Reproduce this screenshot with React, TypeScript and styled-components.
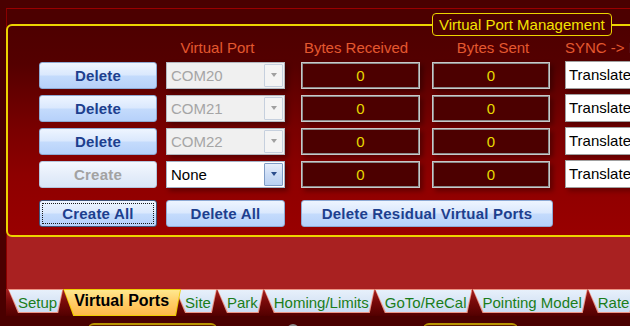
import styled, { createGlobalStyle } from "styled-components";

const GlobalStyle = createGlobalStyle`
  html, body {
    margin: 0;
    padding: 0;
    background: #4a0000;
    overflow: hidden;
  }
  body {
    font-family: "Liberation Sans", Arial, sans-serif;
  }
`;

const Page = styled.div`
  width: 630px;
  height: 326px;
  box-sizing: border-box;
  overflow: hidden;
  padding: 8px 0 0 6px;
  background: #4a0000;
`;

const TabControl = styled.div`
  width: 740px;
`;

const TabPage = styled.div`
  height: 281px;
  box-sizing: border-box;
  padding-top: 4px;
  border-top: 1px solid #9a0000;
  border-left: 1px solid #8a0000;
  background: linear-gradient(to bottom, #4c0000 0, #4c0000 30px, #a92121 30px);
`;

const GroupBox = styled.fieldset`
  margin: 0 0 0 -1px;
  padding: 4px 0 9px 0;
  min-width: 0;
  border: 2px solid #ecd400;
  border-radius: 6px;
  background: linear-gradient(
    to bottom,
    #4e0000 0%,
    #540000 18%,
    #7a0000 50%,
    #8e0000 72%,
    #990000 100%
  );
`;

const Legend = styled.legend`
  margin-left: 424px;
  padding: 0 6px;
  height: 23px;
  box-sizing: border-box;
  line-height: 21px;
  border: 1px solid #ecd400;
  border-radius: 4px;
  background: #4c0000;
  color: #f4e300;
  font-size: 15px;
`;

const Rows = styled.div`
  display: flex;
  flex-direction: column;
  gap: 6px;
  padding-left: 31px;
`;

const Row = styled.div<{ $h: number; $top?: number }>`
  display: grid;
  grid-template-columns: 127px 135px 131px 133px 1fr;
  align-items: center;
  height: ${(p) => p.$h}px;
  margin-top: ${(p) => p.$top ?? 0}px;
`;

const HeaderCell = styled.div<{ $w: number; $left?: number; $right?: number; $align?: string }>`
  width: ${(p) => p.$w}px;
  box-sizing: border-box;
  padding-left: ${(p) => p.$left ?? 0}px;
  padding-right: ${(p) => p.$right ?? 0}px;
  text-align: ${(p) => p.$align ?? "center"};
  white-space: nowrap;
  color: #e4582f;
  font-size: 15px;
  line-height: 15px;
`;

const Button = styled.button<{ $w: number; $focused?: boolean; $span?: number }>`
  width: ${(p) => p.$w}px;
  height: 27px;
  box-sizing: border-box;
  margin: 1px 0 0 0;
  padding: 0;
  grid-column: span ${(p) => p.$span ?? 1};
  font-family: "Liberation Sans", Arial, sans-serif;
  font-weight: bold;
  font-size: 15px;
  letter-spacing: 0.2px;
  color: #1d3f8e;
  border: 1px solid ${(p) => (p.$focused ? "#42557a" : "#8eaad4")};
  border-radius: 3px;
  background: linear-gradient(
    to bottom,
    #eef5ff 0%,
    #dae8fd 48%,
    #c4dbfc 52%,
    #b6d1fa 100%
  );
  outline: ${(p) => (p.$focused ? "1px dotted #1a1a1a" : "none")};
  outline-offset: -4px;

  &:disabled {
    color: #a2a2a2;
    border-color: #b4c6de;
    background: linear-gradient(to bottom, #f4f8fe 0%, #e6eefa 50%, #d9e6f7 100%);
  }
`;

const Combo = styled.div<{ $disabled?: boolean }>`
  width: 119px;
  height: 27px;
  box-sizing: border-box;
  display: flex;
  align-items: center;
  padding: 0 1px 0 4px;
  border: 1px solid ${(p) => (p.$disabled ? "#b2b8c0" : "#a3b3c8")};
  background: ${(p) => (p.$disabled ? "#f0f0f0" : "#ffffff")};
  color: ${(p) => (p.$disabled ? "#a5a5a5" : "#000000")};
  font-size: 15px;
  box-shadow: 3px 3px 5px rgba(0, 0, 0, 0.35);
`;

const ComboValue = styled.span`
  flex: 1;
`;

const ComboArrow = styled.span<{ $disabled?: boolean }>`
  width: 19px;
  height: 23px;
  box-sizing: border-box;
  display: flex;
  align-items: center;
  justify-content: center;
  border: 1px solid ${(p) => (p.$disabled ? "#c6d0de" : "#7f9cc6")};
  border-radius: 1px;
  background: ${(p) =>
    p.$disabled
      ? "#f4f4f4"
      : "linear-gradient(to bottom, #e6eefb 0%, #cbdcf5 50%, #b9d0f2 100%)"};

  &::after {
    content: "";
    border-left: 3px solid transparent;
    border-right: 3px solid transparent;
    border-top: 4px solid ${(p) => (p.$disabled ? "#a0a0a0" : "#2b4d8c")};
  }
`;

const Counter = styled.div<{ $w: number }>`
  width: ${(p) => p.$w}px;
  height: 27px;
  box-sizing: border-box;
  margin-top: 1px;
  display: flex;
  align-items: center;
  justify-content: center;
  border: 1px solid #c9c9c9;
  background: #4c0000;
  box-shadow: inset 0 0 0 1px #8a8a8a, 3px 3px 5px rgba(0, 0, 0, 0.35);
  color: #e8d900;
  font-size: 15px;
`;

const SyncBox = styled.div`
  width: 140px;
  height: 28px;
  box-sizing: border-box;
  margin-top: -1px;
  display: flex;
  align-items: center;
  padding-left: 3px;
  border: 1px solid #a0a0a0;
  background: #ffffff;
  color: #000000;
  font-size: 15px;
  white-space: nowrap;
  box-shadow: 3px 3px 5px rgba(0, 0, 0, 0.3);
`;

const TabStrip = styled.div`
  display: flex;
  align-items: flex-start;
  height: 27px;
  padding-left: 2px;
  background: linear-gradient(to bottom, #a82020 0%, #7a0a0a 45%, #520000 100%);
`;

const tabShape = "polygon(0 0, 100% 0, calc(100% - 5px) 100%, 10px 100%)";

const TabShell = styled.div<{ $active?: boolean }>`
  position: relative;
  z-index: ${(p) => (p.$active ? 2 : 1)};
  height: ${(p) => (p.$active ? 27 : 24)}px;
  box-sizing: border-box;
  padding: 1px;
  margin-right: ${(p) => (p.$active ? -6 : 0)}px;
  background: ${(p) => (p.$active ? "#efcc00" : "#ec9484")};
  clip-path: ${tabShape};
`;

const TabFace = styled.div<{ $active?: boolean }>`
  height: 100%;
  box-sizing: border-box;
  clip-path: ${tabShape};
  padding: ${(p) => (p.$active ? "2px 11px 0 10px" : "3px 5px 0 9px")};
  white-space: nowrap;
  font-size: ${(p) => (p.$active ? 16 : 15)}px;
  font-weight: ${(p) => (p.$active ? "bold" : "normal")};
  line-height: ${(p) => (p.$active ? 18 : 19)}px;
  color: ${(p) => (p.$active ? "#000000" : "#1a7d1a")};
  background: ${(p) =>
    p.$active
      ? "linear-gradient(to bottom, #ffe88e 0%, #ffcf6a 45%, #ffb848 100%)"
      : "linear-gradient(to bottom, #e7f0fb 0%, #d9e6f6 50%, #cbddf3 100%)"};
`;

const Footer = styled.div`
  display: flex;
  align-items: flex-start;
  padding: 7px 0 0 82px;
`;

const GoldPeek = styled.div<{ $w: number; $left?: number }>`
  width: ${(p) => p.$w}px;
  height: 10px;
  box-sizing: border-box;
  margin-left: ${(p) => p.$left ?? 0}px;
  border-top: 2px solid #b89400;
  border-radius: 6px 6px 0 0;
  background: #5a1a00;
`;

const KnobPeek = styled.div`
  width: 12px;
  height: 8px;
  margin: 1px 0 0 70px;
  border-radius: 6px 6px 0 0;
  background: #8a8a8a;
`;

const ports = [
  { name: "COM20", live: true },
  { name: "COM21", live: true },
  { name: "COM22", live: true },
  { name: "None", live: false },
];

const tabs = [
  "Setup",
  "Virtual Ports",
  "Site",
  "Park",
  "Homing/Limits",
  "GoTo/ReCal",
  "Pointing Model",
  "Rate",
];

export default function App() {
  return (
    <>
      <GlobalStyle />
      <Page>
        <TabControl>
          <TabPage>
            <GroupBox>
              <Legend>Virtual Port Management</Legend>
              <Rows>
                <Row $h={15}>
                  <span />
                  <HeaderCell $w={119} $right={16}>
                    Virtual Port
                  </HeaderCell>
                  <HeaderCell $w={119} $right={9}>
                    Bytes Received
                  </HeaderCell>
                  <HeaderCell $w={118} $left={4}>
                    Bytes Sent
                  </HeaderCell>
                  <HeaderCell $w={140} $align="left">
                    SYNC -&gt; PC
                  </HeaderCell>
                </Row>
                {ports.map((port) => (
                  <Row $h={27} key={port.name}>
                    <Button $w={118} disabled={!port.live}>
                      {port.live ? "Delete" : "Create"}
                    </Button>
                    <Combo $disabled={port.live}>
                      <ComboValue>{port.name}</ComboValue>
                      <ComboArrow $disabled={port.live} />
                    </Combo>
                    <Counter $w={119}>0</Counter>
                    <Counter $w={118}>0</Counter>
                    <SyncBox>Translate</SyncBox>
                  </Row>
                ))}
                <Row $h={27} $top={6}>
                  <Button $w={118} $focused>
                    Create All
                  </Button>
                  <Button $w={119}>Delete All</Button>
                  <Button $w={252} $span={2}>
                    Delete Residual Virtual Ports
                  </Button>
                </Row>
              </Rows>
            </GroupBox>
          </TabPage>
          <TabStrip>
            {tabs.map((tab) => (
              <TabShell key={tab} $active={tab === "Virtual Ports"}>
                <TabFace $active={tab === "Virtual Ports"}>{tab}</TabFace>
              </TabShell>
            ))}
          </TabStrip>
          <Footer>
            <GoldPeek $w={129} />
            <KnobPeek />
            <GoldPeek $w={95} $left={124} />
          </Footer>
        </TabControl>
      </Page>
    </>
  );
}
